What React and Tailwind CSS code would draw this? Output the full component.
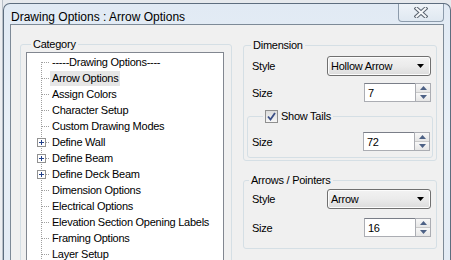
import React from 'react';

const items = [
  { label: '-----Drawing Options----', first: true },
  { label: 'Arrow Options', selected: true },
  { label: 'Assign Colors' },
  { label: 'Character Setup' },
  { label: 'Custom Drawing Modes' },
  { label: 'Define Wall', plus: true },
  { label: 'Define Beam', plus: true },
  { label: 'Define Deck Beam', plus: true },
  { label: 'Dimension Options' },
  { label: 'Electrical Options' },
  { label: 'Elevation Section Opening Labels' },
  { label: 'Framing Options' },
  { label: 'Layer Setup' },
];

function TreeLines({ first, plus }) {
  return (
    <svg width="23" height="16" className="shrink-0" shapeRendering="crispEdges">
      <line x1="14.5" y1={first ? 8 : 0} x2="14.5" y2="16" stroke="#a0a0a0" strokeDasharray="1 1" />
      <line x1="15" y1="8.5" x2="23" y2="8.5" stroke="#a0a0a0" strokeDasharray="1 1" />
      {plus && (
        <g>
          <rect x="10.5" y="4.5" width="8" height="8" fill="#fff" stroke="#919191" />
          <line x1="12" y1="8.5" x2="17" y2="8.5" stroke="#22408a" />
          <line x1="14.5" y1="6" x2="14.5" y2="11" stroke="#22408a" />
        </g>
      )}
    </svg>
  );
}

function Combo({ value }) {
  return (
    <div className="w-[104px] h-[20px] rounded-[3px] border border-[#707070] bg-linear-to-b from-[#f2f2f2] via-[#ebebeb] to-[#dcdcdc] flex items-center justify-between pl-[3px] pr-[6px] shadow-[inset_0_0_0_1px_#fcfcfc]">
      <span>{value}</span>
      <svg width="7" height="4" className="shrink-0">
        <path d="M0 0H7L3.5 4Z" fill="#000" />
      </svg>
    </div>
  );
}

function Spin({ value }) {
  return (
    <div className="flex h-[19px]">
      <div className="w-[51px] h-full bg-white border border-[#abadb3] border-r-0 border-t-[#7a7e88] pl-[3px] flex items-center">
        {value}
      </div>
      <div className="w-[16px] h-full flex flex-col border border-[#abadb3] bg-[#f4f4f4]">
        <div className="flex-1 flex items-center justify-center border-b border-[#c9c9c9] bg-linear-to-b from-[#f8f8f8] to-[#e6e6e6]">
          <svg width="7" height="4"><path d="M0 4H7L3.5 0Z" fill="#4d6185" /></svg>
        </div>
        <div className="flex-1 flex items-center justify-center bg-linear-to-b from-[#f8f8f8] to-[#e6e6e6]">
          <svg width="7" height="4"><path d="M0 0H7L3.5 4Z" fill="#4d6185" /></svg>
        </div>
      </div>
    </div>
  );
}

export default function App() {
  return (
    <div className="w-[451px] h-[260px] overflow-hidden flex bg-[#e6e9ed] font-['Liberation_Sans',Arial,sans-serif] text-black">
      <div className="w-[3px] shrink-0 bg-[#eceef1] border-r border-[#b9c0c8]" />
      <div className="mt-[3px] w-[448px] shrink-0 flex flex-col border border-b-0 border-[#5d6d7e] rounded-t-[7px] bg-linear-to-b from-[#e1eaf4] via-[#e9f0f7] to-[#e3ebf4] px-[6px]">
        {/* title bar */}
        <div className="h-[27px] flex items-start justify-between">
          <div className="pl-[1px] pt-[6px] text-[12px] leading-[14px]">Drawing Options : Arrow Options</div>
          <div className="w-[46px] h-[18px] rounded-b-[4px] border border-t-0 border-[#8c9bab] bg-linear-to-b from-[#eef3f8] to-[#dfe8f1] flex items-center justify-center">
            <svg width="14" height="11" viewBox="0 0 14 11">
              <path d="M2.5 1.5L11.5 9.5M11.5 1.5L2.5 9.5" stroke="#5a6470" strokeWidth="4" strokeLinecap="square" />
              <path d="M2.5 1.5L11.5 9.5M11.5 1.5L2.5 9.5" stroke="#f6f8fa" strokeWidth="2" strokeLinecap="square" />
            </svg>
          </div>
        </div>

        {/* client area */}
        <div className="flex-1 border border-[#7d8a97] bg-[#f0f0f0] flex items-start pl-[9px] pr-[6px] text-[11px] leading-[14px] tracking-[-0.25px]">
          <fieldset className="w-[212px] mt-[12px] border border-[#d5dfe5] rounded-[3px] pl-[5px] pr-[7px]">
            <legend className="ml-[5px] px-[2px]">Category</legend>
            <div className="mt-[1px] h-[230px] bg-white border border-[#828790] pt-[1px]">
              {items.map((it) => (
                <div key={it.label} className="flex items-center h-[16px]">
                  <TreeLines first={it.first} plus={it.plus} />
                  <span className={'px-[2px] h-[15px] flex items-center whitespace-nowrap ' + (it.selected ? 'bg-[#e6e6e6]' : '')}>
                    {it.label}
                  </span>
                </div>
              ))}
            </div>
          </fieldset>

          <div className="ml-[11px] w-[194px] flex flex-col">
            <fieldset className="mt-[13px] border border-[#d5dfe5] rounded-[3px] px-[3px] pb-[2px]">
              <legend className="ml-[4px] px-[2px]">Dimension</legend>
              <div className="mt-[4px] h-[20px] pl-[5px] pr-[2px] flex items-center justify-between">
                <span>Style</span>
                <Combo value="Hollow Arrow" />
              </div>
              <div className="mt-[7px] pl-[5px] pr-[2px] flex items-center justify-between">
                <span>Size</span>
                <Spin value="7" />
              </div>
              <fieldset className="mt-[7px] border border-[#d5dfe5] rounded-[3px] pl-[4px] pr-[2px] pb-[6px]">
                <legend className="ml-[11px] px-[2px] flex items-center gap-[3px]">
                  <span className="w-[13px] h-[13px] border border-[#8f8f8f] bg-linear-to-b from-[#dcdcdc] to-[#f6f6f6] flex items-center justify-center">
                    <svg width="9" height="9" viewBox="0 0 9 9">
                      <path d="M1 4.5L3.5 7.5L8 1" fill="none" stroke="#3b4f86" strokeWidth="1.8" />
                    </svg>
                  </span>
                  <span>Show Tails</span>
                </legend>
                <div className="mt-[9px] flex items-center justify-between">
                  <span>Size</span>
                  <Spin value="72" />
                </div>
              </fieldset>
            </fieldset>

            <fieldset className="mt-[12px] border border-[#d5dfe5] rounded-[3px] pl-[8px] pr-[5px] pb-[11px]">
              <legend className="-ml-[3px] px-[2px]">Arrows / Pointers</legend>
              <div className="mt-[2px] h-[20px] flex items-center justify-between">
                <span>Style</span>
                <Combo value="Arrow" />
              </div>
              <div className="mt-[9px] flex items-center justify-between">
                <span>Size</span>
                <Spin value="16" />
              </div>
            </fieldset>
          </div>
        </div>
      </div>
    </div>
  );
}
